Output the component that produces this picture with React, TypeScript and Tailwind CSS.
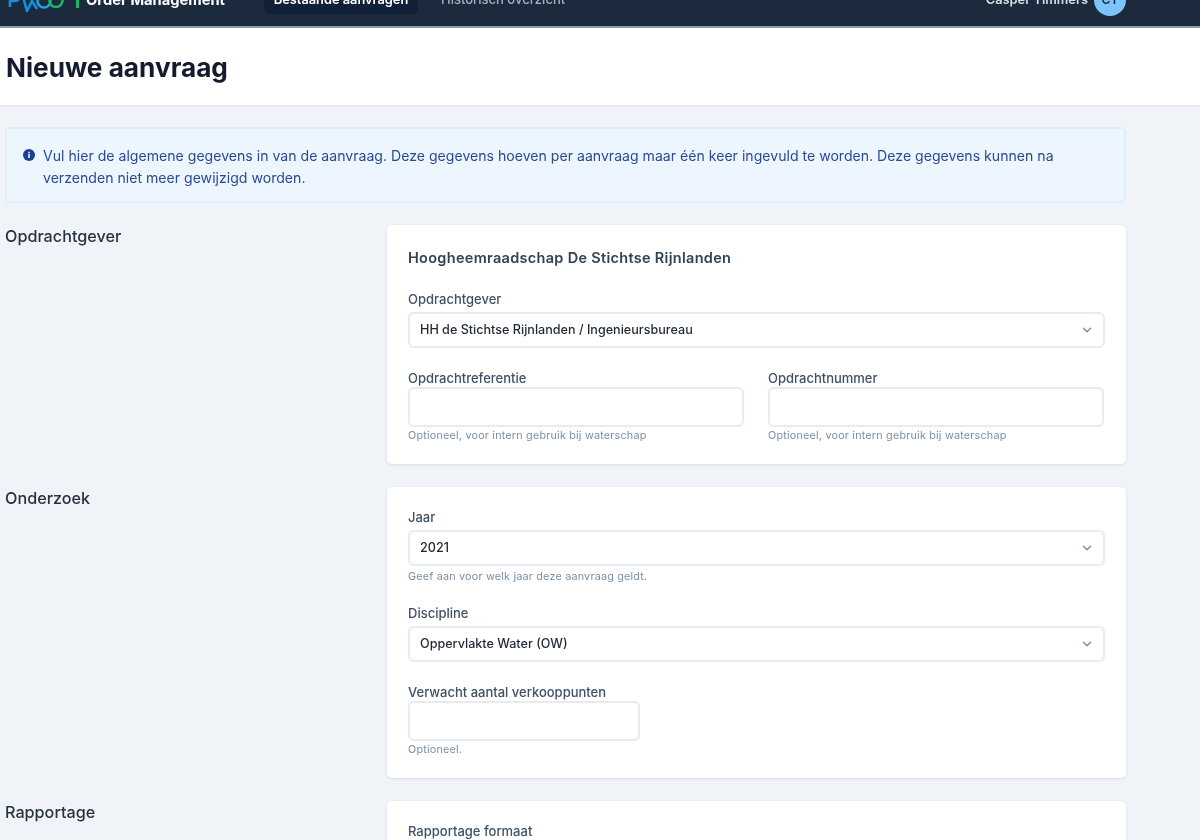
import React from 'react';
import { ChevronDown } from 'lucide-react';

const Label: React.FC<{ children: React.ReactNode }> = ({ children }) => (
  <label className="block text-[13px] leading-[16px] font-medium text-[#3e5166]">{children}</label>
);

const Hint: React.FC<{ children: React.ReactNode; className?: string }> = ({ children, className }) => (
  <p className={`text-[10.8px] leading-[12px] text-[#7b8ea5] tracking-[0.2px] ${className ?? 'mt-[3px]'}`}>{children}</p>
);

const SelectBox: React.FC<{ value: string }> = ({ value }) => (
  <div className="mt-[5px] h-[36px] pl-[10px] pr-[9px] flex items-center justify-between bg-white border-2 border-[#e6ebf2] rounded-[6px]">
    <span className="text-[12.6px] font-medium text-[#1f2935]">{value}</span>
    <ChevronDown className="w-[14px] h-[14px] text-[#7d8ea3]" strokeWidth={2.5} />
  </div>
);

const InputBox: React.FC<{ className?: string }> = ({ className }) => (
  <div className={`mt-[1px] h-[40px] bg-white border-2 border-[#e6ebf2] rounded-[6px] ${className ?? ''}`} />
);

const Section: React.FC<{ title: string; className?: string; children: React.ReactNode }> = ({ title, className, children }) => (
  <div className="flex items-start">
    <h2 className="w-[382px] shrink-0 text-[16.2px] leading-[22px] font-medium text-[#27333f]">{title}</h2>
    <div className={`w-[739px] px-[21px] bg-white rounded-[5px] shadow-[0_1px_3px_rgba(60,80,110,0.14)] ${className ?? ''}`}>
      {children}
    </div>
  </div>
);

export default function App() {
  return (
    <div className="h-[840px] overflow-hidden bg-[#f0f4f8] blur-[0.6px] font-['Inter',sans-serif]">
      <header className="h-[28px] bg-[#1b2a3d] border-b-2 border-[#8e99a8] overflow-hidden">
        <div className="-mt-[14px] h-[28px] flex items-center pl-[5px] pr-[74px]">
          <svg width="68" height="30" viewBox="0 0 68 30" fill="none" className="shrink-0">
            <path d="M5 4v18M5 5h5a5 5 0 0 1 0 11H5" stroke="#1190dc" strokeWidth="2.6" />
            <path d="M18 12l4 14 5-10 5 8" stroke="#1190dc" strokeWidth="2.6" strokeLinejoin="round" />
            <circle cx="39" cy="16" r="6.5" stroke="#1da3e4" strokeWidth="2.6" />
            <circle cx="51" cy="15.5" r="6.5" stroke="#1cb562" strokeWidth="2.6" />
          </svg>
          <div className="ml-[3px] w-[3px] h-[16px] bg-[#1cb562] shrink-0" />
          <span className="ml-[7px] w-[140px] shrink-0 text-[14.7px] font-bold text-white whitespace-nowrap">Order Management</span>
          <div className="ml-[38px] h-[28px] w-[154px] flex items-center justify-center rounded-[5px] bg-[#102038] shrink-0">
            <span className="text-[12.8px] font-semibold text-white whitespace-nowrap">Bestaande aanvragen</span>
          </div>
          <span className="ml-[23px] text-[13px] font-medium text-[#a4b1c0] whitespace-nowrap">Historisch overzicht</span>
          <span className="ml-auto text-[12.8px] font-semibold text-[#d8dee6] whitespace-nowrap">Casper Timmers</span>
          <div className="ml-[6px] w-[32px] h-[32px] shrink-0 rounded-full bg-[#7cc4fa] flex items-center justify-center text-[12px] font-semibold text-[#1b2a3d]">CT</div>
        </div>
      </header>

      <div className="h-[79px] pt-[3px] bg-white border-b-2 border-[#e6eaef] flex items-center pl-[6px]">
        <h1 className="text-[26.2px] font-bold text-[#121c2e]">Nieuwe aanvraag</h1>
      </div>

      <main className="pl-[5px] pt-[20px]">
        <div className="w-[1121px] h-[76px] px-[16px] py-[16px] flex bg-[#edf6ff] border-2 border-[#dfeefc] rounded-[5px]">
          <svg width="12" height="12" viewBox="0 0 12 12" className="shrink-0 mt-[4px]">
            <circle cx="6" cy="6" r="6" fill="#1a3f94" />
            <rect x="5.2" y="5" width="1.6" height="4" fill="#ebf5ff" />
            <rect x="5.2" y="2.8" width="1.6" height="1.5" fill="#ebf5ff" />
          </svg>
          <p className="ml-[8px] w-[1040px] text-[14.1px] leading-[22px] text-[#2b4a94]">
            Vul hier de algemene gegevens in van de aanvraag. Deze gegevens hoeven per aanvraag maar één keer ingevuld te worden. Deze gegevens kunnen na verzenden niet meer gewijzigd worden.
          </p>
        </div>

        <div className="mt-[22px] flex flex-col gap-[23px]">
          <Section title="Opdrachtgever" className="h-[239px] pt-[25px]">
            <h3 className="text-[14.5px] leading-[16px] font-semibold text-[#334252] tracking-[0.3px]">Hoogheemraadschap De Stichtse Rijnlanden</h3>
            <div className="mt-[25px]">
              <Label>Opdrachtgever</Label>
              <SelectBox value="HH de Stichtse Rijnlanden / Ingenieursbureau" />
            </div>
            <div className="mt-[22px] grid grid-cols-[336px_336px] gap-x-[24px]">
              <div>
                <Label>Opdrachtreferentie</Label>
                <InputBox />
                <Hint>Optioneel, voor intern gebruik bij waterschap</Hint>
              </div>
              <div>
                <Label>Opdrachtnummer</Label>
                <InputBox />
                <Hint>Optioneel, voor intern gebruik bij waterschap</Hint>
              </div>
            </div>
          </Section>

          <Section title="Onderzoek" className="h-[291px] pt-[22px]">
            <Label>Jaar</Label>
            <SelectBox value="2021" />
            <Hint className="mt-[5px]">Geef aan voor welk jaar deze aanvraag geldt.</Hint>
            <div className="mt-[22px]">
              <Label>Discipline</Label>
              <SelectBox value="Oppervlakte Water (OW)" />
            </div>
            <div className="mt-[22px]">
              <Label>Verwacht aantal verkooppunten</Label>
              <InputBox className="w-[232px]" />
              <Hint>Optioneel.</Hint>
            </div>
          </Section>

          <Section title="Rapportage" className="h-[100px] pt-[22px]">
            <Label>Rapportage formaat</Label>
          </Section>
        </div>
      </main>
    </div>
  );
}
